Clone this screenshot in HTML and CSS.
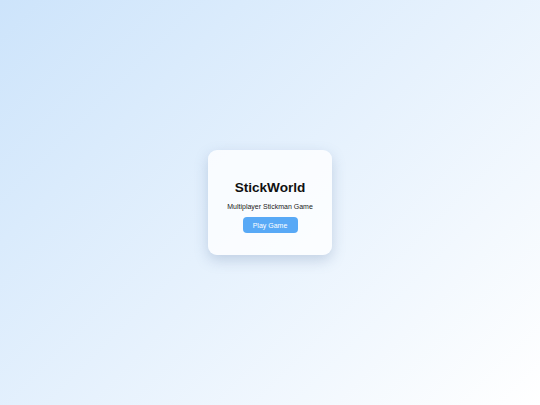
FILE: index.html
```html
<!DOCTYPE html>
<html lang="en">
<head>
    <meta charset="UTF-8">
    <title>StickWorld</title>
    <link rel="stylesheet" href="styles.css">
</head>
<body>

<div class="menu">
    <h1 class="menu-title">StickWorld</h1>
    <p class="menu-subtitle">Multiplayer Stickman Game</p>
    <button class="menu-play" id="btnPlay">Play Game</button>
</div>

</body>
</html>
```
FILE: styles.css
```css
html, body {
    margin: 0;
    height: 100%;
}
body {
    display: flex;
    align-items: center;
    justify-content: center;
    font-family: "Liberation Sans", Arial, sans-serif;
    background: linear-gradient(135deg, #cde4fb 0%, #ffffff 100%);
}

.menu {
    display: flex;
    flex-direction: column;
    align-items: center;
    width: 124px;
    height: 105px;
    box-sizing: border-box;
    padding-top: 30px;
    border-radius: 9px;
    background-color: rgba(255, 255, 255, 0.78);
    box-shadow: 0 5px 14px rgba(90, 120, 160, 0.28);
}
.menu-title {
    margin: 0;
    font-size: 13.6px;
    line-height: 16px;
    font-weight: bold;
    color: #111;
}
.menu-subtitle {
    margin: 7px 0 0;
    font-size: 7px;
    line-height: 8px;
    color: #222;
}
.menu-play {
    margin-top: 6px;
    width: 55px;
    height: 16px;
    padding: 0;
    border: 0;
    border-radius: 4px;
    font-family: inherit;
    font-size: 7px;
    color: #fff;
    background-color: #58a9f6;
    cursor: pointer;
}
```
